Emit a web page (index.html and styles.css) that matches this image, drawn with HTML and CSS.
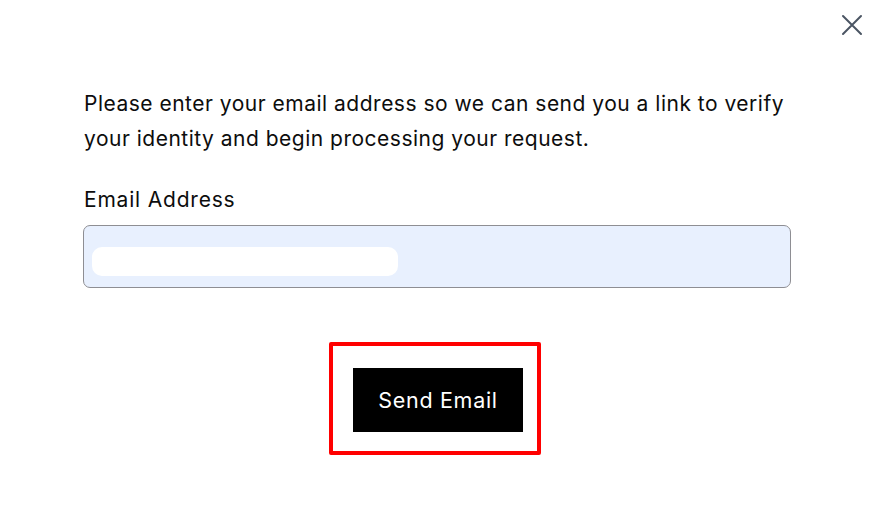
FILE: index.html
```html
<!DOCTYPE html>
<html lang="en">
<head>
  <meta charset="UTF-8">
  <meta name="viewport" content="width=device-width, initial-scale=1.0">
  <title>Verify identity</title>
  <link rel="stylesheet" href="styles.css">
</head>
<body>
  <section class="modal">
    <div class="modal-top">
      <button class="close" aria-label="Close">
        <svg width="22" height="22" viewBox="0 0 22 22" fill="none" stroke="#4b5563" stroke-width="2" stroke-linecap="round">
          <path d="M2 2 L20 20 M20 2 L2 20"/>
        </svg>
      </button>
    </div>
    <p class="intro">Please enter your email address so we can send you a link to verify your identity and begin processing your request.</p>
    <form class="email-form">
      <label for="email">Email Address</label>
      <div class="field">
        <span class="autofill"></span>
      </div>
      <div class="actions">
        <div class="highlight">
          <button type="submit" class="send">Send Email</button>
        </div>
      </div>
    </form>
  </section>
</body>
</html>
```

FILE: styles.css
```css
body {
  margin: 0;
  background: #fff;
  font-family: Inter, "Noto Sans", sans-serif;
  color: #0d0d0d;
}

.modal {
  width: 878px;
  height: 515px;
  box-sizing: border-box;
  padding: 0 87px 0 83px;
}

.modal-top {
  display: flex;
  justify-content: flex-end;
  height: 86px;
  margin-right: -72px;
  padding-top: 14px;
  box-sizing: border-box;
}

.close {
  width: 22px;
  height: 22px;
  padding: 0;
  border: none;
  background: none;
  cursor: pointer;
}

.intro {
  margin: 0;
  font-size: 21px;
  line-height: 35px;
  letter-spacing: 0.5px;
  padding-left: 1px;
}

.email-form {
  display: flex;
  flex-direction: column;
  margin-top: 28px;
}

.email-form label {
  font-size: 21px;
  line-height: 32px;
  letter-spacing: 0.8px;
  padding-left: 1px;
}

.field {
  margin-top: 9px;
  height: 63px;
  border: 1px solid #8e8e93;
  border-radius: 7px;
  background: #e8f0fe;
  box-sizing: border-box;
  display: flex;
  align-items: center;
  padding: 0 0 1px 8px;
}

.autofill {
  display: block;
  width: 306px;
  height: 29px;
  border-radius: 10px;
  background: #fff;
  margin-top: 10px;
}

.actions {
  display: flex;
  justify-content: center;
  margin-top: 54px;
  padding-right: 4px;
}

.highlight {
  border: 4px solid #ff0000;
  border-radius: 2px;
  padding: 22px 14px 19px 20px;
}

.send {
  width: 170px;
  height: 64px;
  border: none;
  background: #000;
  color: #fff;
  font-family: Inter, "Noto Sans", sans-serif;
  font-size: 21.5px;
  letter-spacing: 0.7px;
  cursor: pointer;
}
```
